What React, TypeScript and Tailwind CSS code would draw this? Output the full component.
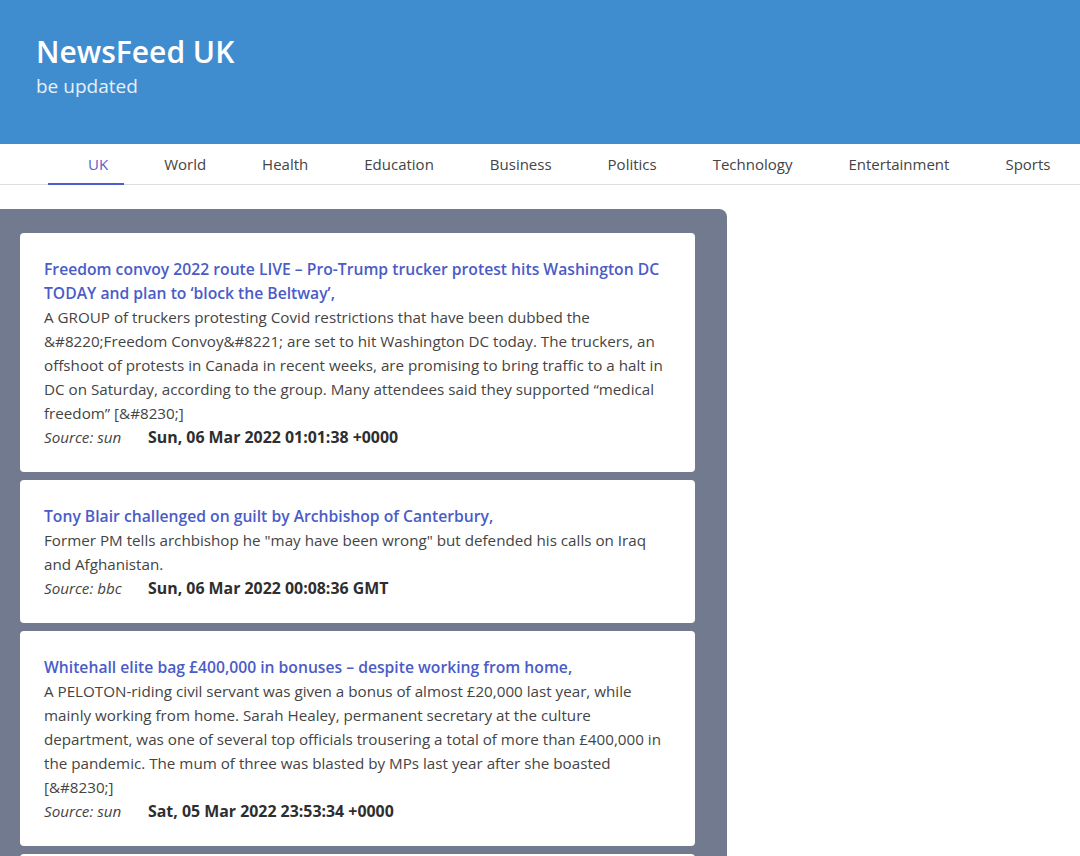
import React from 'react';

interface Article {
  title: string;
  description: string;
  source: string;
  date: string;
}

const tabs = ['UK', 'World', 'Health', 'Education', 'Business', 'Politics', 'Technology', 'Entertainment', 'Sports'];

const articles: Article[] = [
  {
    title: 'Freedom convoy 2022 route LIVE – Pro-Trump trucker protest hits Washington DC TODAY and plan to ‘block the Beltway’,',
    description:
      'A GROUP of truckers protesting Covid restrictions that have been dubbed the &#8220;Freedom Convoy&#8221; are set to hit Washington DC today. The truckers, an offshoot of protests in Canada in recent weeks, are promising to bring traffic to a halt in DC on Saturday, according to the group. Many attendees said they supported “medical freedom” [&#8230;]',
    source: 'sun',
    date: 'Sun, 06 Mar 2022 01:01:38 +0000',
  },
  {
    title: 'Tony Blair challenged on guilt by Archbishop of Canterbury,',
    description:
      'Former PM tells archbishop he "may have been wrong" but defended his calls on Iraq and Afghanistan.',
    source: 'bbc',
    date: 'Sun, 06 Mar 2022 00:08:36 GMT',
  },
  {
    title: 'Whitehall elite bag £400,000 in bonuses – despite working from home,',
    description:
      'A PELOTON-riding civil servant was given a bonus of almost £20,000 last year, while mainly working from home. Sarah Healey, permanent secretary at the culture department, was one of several top officials trousering a total of more than £400,000 in the pandemic. The mum of three was blasted by MPs last year after she boasted [&#8230;]',
    source: 'sun',
    date: 'Sat, 05 Mar 2022 23:53:34 +0000',
  },
  {
    title: 'Ukraine latest: Russian forces continue shelling as ceasefire collapses,',
    description: 'Live updates as the situation develops.',
    source: 'bbc',
    date: 'Sat, 05 Mar 2022 23:40:12 GMT',
  },
];

const App: React.FC = () => {
  return (
    <div className="min-h-screen bg-white font-['Open_Sans',sans-serif] text-[#444]">
      {/* Header */}
      <header className="bg-[#3f8dcf] h-[144px] px-9 pt-8 text-white">
        <h1 className="text-[30px] leading-[40px] font-semibold">NewsFeed UK</h1>
        <p className="text-[19px] leading-7 text-[#e6f0fa]">be updated</p>
      </header>

      {/* Tabs */}
      <nav className="relative h-[41px] border-b border-[#dddddd] flex pl-[60px]">
        {tabs.map((tab) => (
          <div
            key={tab}
            className={`px-7 h-10 flex items-center text-[15px] ${
              tab === 'UK' ? 'text-[#5563c4]' : 'text-[#444]'
            }`}
          >
            {tab}
          </div>
        ))}
        <span className="absolute left-[48px] bottom-[-1px] w-[76px] h-[2px] bg-[#4a5dcc]" />
      </nav>

      {/* Feed */}
      <main className="pt-6">
        <div className="w-[727px] bg-[#717a8f] rounded-tr-lg pt-6 pl-5 pr-8 pb-6 flex flex-col gap-2">
          {articles.map((a, i) => (
            <article key={i} className="bg-white rounded px-6 pt-6 pb-[23px] text-[15.2px] leading-6">
              <h2 className="font-semibold text-[15.7px] text-[#4a5cc8]">{a.title}</h2>
              <p className="text-[#444]">{a.description}</p>
              <div className="flex items-baseline h-6">
                <span className="italic w-[104px] text-[#444]">Source: {a.source}</span>
                <span className="font-bold text-[15.9px] text-[#2e2e2e]">{a.date}</span>
              </div>
            </article>
          ))}
        </div>
      </main>
    </div>
  );
};

export default App;
